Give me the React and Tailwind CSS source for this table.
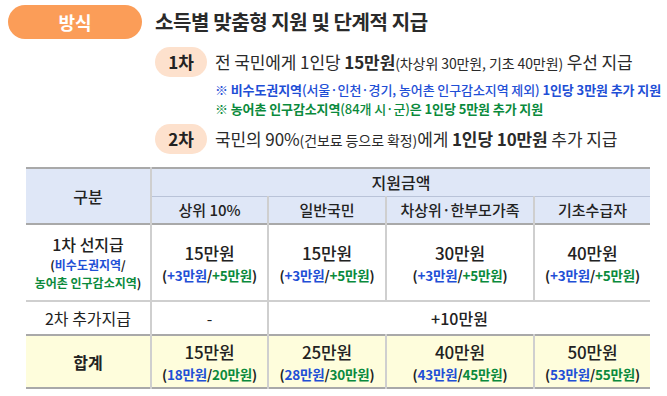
const font = { fontFamily: '"Noto Sans CJK KR", "Noto Sans", sans-serif' };

function Pill({ children }) {
  return (
    <span className="flex h-[30px] w-[52px] shrink-0 items-center justify-center rounded-full bg-[#fde1cd] text-[17px] font-bold text-[#222]">
      {children}
    </span>
  );
}

function Sub({ a, b }) {
  return (
    <div className="whitespace-nowrap text-[13.5px] font-bold leading-[20px] tracking-[-0.2px] text-[#222]">
      (<span className="text-[#1f4fd6]">{a}</span>/<span className="text-[#0a8a3c]">{b}</span>)
    </div>
  );
}

function Amount({ main, a, b }) {
  return (
    <div className="flex flex-col items-center">
      <div className="text-[17px] font-medium leading-[24px] tracking-[-0.2px] text-[#222]">{main}</div>
      <Sub a={a} b={b} />
    </div>
  );
}

export default function App() {
  const cell = 'border-x-2 border-[#cfcfcf] text-center align-middle';
  return (
    <div className="h-[396px] w-[667px] overflow-hidden bg-white text-[#222]" style={font}>
      <div className="flex items-center pt-[5px] pl-2">
        <span className="flex h-[34px] w-[134px] items-center justify-center rounded-full bg-[#fb9d58] text-[18px] font-bold text-white">
          방식
        </span>
        <h1 className="ml-[13px] text-[20px] font-bold tracking-[-0.4px] text-[#2a2a2a]">
          소득별 맞춤형 지원 및 단계적 지급
        </h1>
      </div>

      <div className="mt-2 ml-[155px] flex flex-col">
        <div className="flex items-center gap-2">
          <Pill>1차</Pill>
          <p className="whitespace-nowrap text-[17px] tracking-[-0.1px] text-[#2a2a2a]">
            전 국민에게 1인당 <b>15만원</b>
            <span className="text-[14px]">(차상위 30만원, 기초 40만원)</span> 우선 지급
          </p>
        </div>
        <p className="mt-[3px] ml-[60px] whitespace-nowrap text-[13px] font-bold leading-[19px] tracking-[-0.1px] text-[#1f4fd6]">
          ※ 비수도권지역<span className="font-medium">(서울·인천·경기, 농어촌 인구감소지역 제외)</span> 1인당 3만원 추가 지원
        </p>
        <p className="ml-[60px] whitespace-nowrap text-[13px] font-bold leading-[19px] tracking-[-0.1px] text-[#0a8a3c]">
          ※ 농어촌 인구감소지역<span className="font-medium">(84개 시·군)</span>은 1인당 5만원 추가 지원
        </p>
        <div className="mt-[6px] flex items-center gap-2">
          <Pill>2차</Pill>
          <p className="whitespace-nowrap text-[17px] tracking-[-0.1px] text-[#2a2a2a]">
            국민의 90%<span className="text-[14px]">(건보료 등으로 확정)</span>에게 <b>1인당 10만원</b> 추가 지급
          </p>
        </div>
      </div>

      <table className="mt-[13px] ml-[26px] w-[624px] table-fixed border-collapse border-y-2 border-[#a9a9a9]">
        <colgroup>
          <col className="w-[125px]" />
          <col className="w-[117px]" />
          <col className="w-[118px]" />
          <col className="w-[148px]" />
          <col className="w-[116px]" />
        </colgroup>
        <thead>
          <tr className="h-[28px] bg-[#dfe7f7]">
            <th rowSpan={2} className="border-l-0 border-r-2 border-[#cfcfcf] text-[16px] font-medium">
              구분
            </th>
            <th colSpan={4} className="border-b border-[#b9c3d8] text-[16px] font-medium">
              지원금액
            </th>
          </tr>
          <tr className="h-[28px] border-b-2 border-[#a9a9a9] bg-[#dfe7f7] text-[15px]">
            <th className={cell + ' font-medium'}>상위 10%</th>
            <th className={cell + ' font-medium'}>일반국민</th>
            <th className={cell + ' font-medium'}>차상위·한부모가족</th>
            <th className="border-l-2 border-[#cfcfcf] font-medium">기초수급자</th>
          </tr>
        </thead>
        <tbody>
          <tr className="h-[77px] border-b-2 border-[#cfcfcf]">
            <td className="border-r-2 border-[#cfcfcf] text-center">
              <div className="text-[16px] font-medium leading-[23px]">1차 선지급</div>
              <div className="text-[12px] font-bold leading-[18px]">
                (<span className="text-[#1f4fd6]">비수도권지역</span>/
              </div>
              <div className="text-[12px] font-bold leading-[18px]">
                <span className="text-[#0a8a3c]">농어촌 인구감소지역</span>)
              </div>
            </td>
            <td className={cell}><Amount main="15만원" a="+3만원" b="+5만원" /></td>
            <td className={cell}><Amount main="15만원" a="+3만원" b="+5만원" /></td>
            <td className={cell}><Amount main="30만원" a="+3만원" b="+5만원" /></td>
            <td className="border-l-2 border-[#cfcfcf] text-center"><Amount main="40만원" a="+3만원" b="+5만원" /></td>
          </tr>
          <tr className="h-[34px] border-b-2 border-[#a9a9a9] text-[16px]">
            <td className="border-r-2 border-[#cfcfcf] text-center">2차 추가지급</td>
            <td className={cell}>-</td>
            <td colSpan={3} className="text-center font-medium">+10만원</td>
          </tr>
          <tr className="h-[53px] bg-[#fefddc]">
            <td className="border-r-2 border-[#cfcfcf] text-center text-[16px] font-bold">합계</td>
            <td className={cell}><Amount main="15만원" a="18만원" b="20만원" /></td>
            <td className={cell}><Amount main="25만원" a="28만원" b="30만원" /></td>
            <td className={cell}><Amount main="40만원" a="43만원" b="45만원" /></td>
            <td className="border-l-2 border-[#cfcfcf] text-center"><Amount main="50만원" a="53만원" b="55만원" /></td>
          </tr>
        </tbody>
      </table>
    </div>
  );
}
